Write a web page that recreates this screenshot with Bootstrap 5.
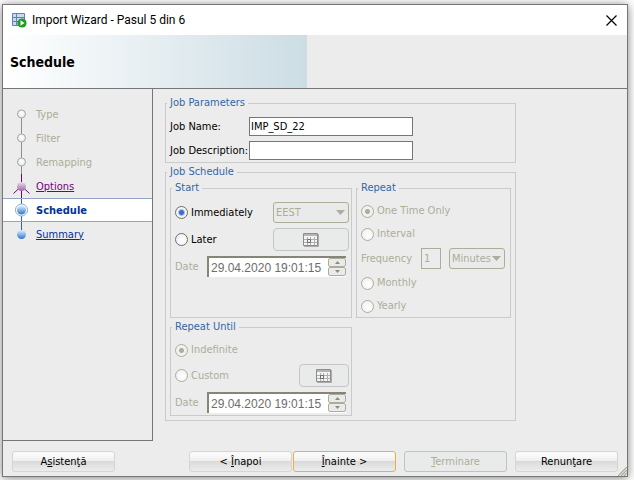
<!DOCTYPE html>
<html lang="ro">
<head>
<meta charset="utf-8">
<meta name="viewport" content="width=device-width, initial-scale=1">
<title>Import Wizard - Pasul 5 din 6</title>
<link href="https://cdn.jsdelivr.net/npm/bootstrap@5.3.0/dist/css/bootstrap.min.css" rel="stylesheet">
<style>
  :root { --face: #ececec; --frame: #767676; --group: #c8cacb; --off: #adad99; --title: #3467a5; }
  body { font-family: "DejaVu Sans Condensed", Tahoma, "Noto Sans", sans-serif; font-size: 11px; line-height: 14px; color: #000; background: #fff; padding: 4px 6px 3px 2px; }
  .wizard { background: var(--face); border: 1px solid var(--frame); box-shadow: 0 1px 9px rgba(0,0,0,.5); }
  .titlebar { height: 30px; padding: 0 8px 0 9px; font-family: Roboto, "Noto Sans", sans-serif; font-size: 12px; gap: 5px; }
  .close-btn { width: 16px; height: 16px; }
  .banner { height: 54px; border-bottom: 1px solid var(--frame); background: linear-gradient(90deg, #fff, #ccdde4) no-repeat 0 0 / 304px 100%; padding-left: 7px; }
  .banner h1 { font-size: 14px; line-height: 18px; }
  .steps { width: 150px; padding-top: 13px; border-right: 1px solid var(--frame); border-bottom: 1px solid var(--frame); }
  .step { height: 24px; padding-left: 6px; color: var(--off); }
  .step span, .step a { padding-top: 1px; }
  .step a { color: #003399; }
  .step a.visited { color: #730080; }
  .step.current { background: #fff; border: solid #94a3c6; border-width: 1px 0; font-weight: bold; color: #003399; }
  .step svg { margin-right: 3px; overflow: visible; }
  .panel { padding: 7px 12px 20px; }
  .panel form { max-width: 351px; gap: 2px; }
  fieldset { border: 1px solid var(--group); padding: 7px 2px 2px 4px; }
  legend { font-size: 11px; line-height: 14px; color: var(--title); padding: 0 3px; margin-left: -3px; }
  .outer { padding: 2px 4px 4px; }
  .start-area { grid-template-columns: 182fr 155fr; gap: 2px 4px; }
  .rows { gap: 5px; }
  .line { min-height: 18px; }
  .name-label { width: 79px; }
  .field { width: 164px; height: 19px; border: 1px solid var(--frame); padding: 0 1px; background: #fff; }
  input[type=radio] { appearance: none; width: 13px; height: 13px; margin: 0 3px 0 0; border: 1px solid #6f6f6f; border-radius: 50%; background: radial-gradient(circle at 60% 60%, #fff, #ececec); }
  input[type=radio]:checked { background: radial-gradient(circle, #3c6fc4 0 2px, #a9c3ea 3px, #f4f4f4 4px); }
  input[type=radio]:disabled { border-color: var(--off); }
  input[type=radio]:disabled:checked { background: radial-gradient(circle, var(--off) 0 2px, #f1f1f1 3px); }
  .off { color: var(--off); }
  .combo { appearance: none; height: 21px; border: 1px solid var(--off); border-radius: 3px; padding: 0 2px; color: var(--off); opacity: 1; background: #e9ebeb url("data:image/svg+xml,%3Csvg xmlns='http://www.w3.org/2000/svg' width='9' height='5'%3E%3Cpath d='M0 0h9L4.500 5z' fill='%23adad99'/%3E%3C/svg%3E") no-repeat right 3px center; }
  .zone { width: 76px; }
  .unit { width: 56px; }
  .freq { width: 20px; height: 21px; border: 1px solid var(--off); background: transparent; color: var(--off); padding: 0 2px; margin-right: 8px; }
  .freq-label { width: 60px; }
  .cal-btn { height: 23px; border: 1px solid #c3c6c6; border-radius: 4px; background: #e9ebeb; }
  .cal-wide { width: 76px; }
  .cal-narrow { width: 50px; }
  .date-label { width: 32px; flex: none; }
  .spin { height: 21px; min-width: 0; margin-right: 3px; background: #fff; border: solid #85857a; border-width: 2px 0 0 2px; }
  .spin input { width: 0; min-width: 0; border: 0; padding: 0 2px; background: transparent; color: #6d6d6d; font: 12px "Liberation Sans", Arial, sans-serif; }
  .spin button { width: 18px; height: 9px; border: 1px solid var(--off); border-radius: 2px; background: #e9ebeb; }
  .footer-bar { padding: 10px 9px 4px; }
  .push { width: 103px; height: 21px; border: 1px solid #d5d5d5; border-radius: 3px; background: linear-gradient(#f9f9f9 0 20%, #ededed 48%, #dadada 50%, #ececec); color: #000; }
  .push.next { border: 1px solid #efad3c; }
  .push:disabled { background: #e9ebeb; border-color: #bfc3c3; color: var(--off); }
  .back { margin-right: 1px; }
  .grip { right: 0; bottom: 0; }
</style>
</head>
<body>
<div class="wizard position-relative">
  <header class="titlebar bg-white d-flex align-items-center">
    <svg width="15" height="15" viewBox="0 0 15 15" aria-hidden="true"><path d="M.5.500h12v12H.500z" fill="#c8d9f2" stroke="#5b83bf"/><path d="M0 4.500h13M0 8.500h13M4.500 1v12" stroke="#5b83bf"/><circle cx="10" cy="10" r="4.600" fill="#1ca01c"/><path d="M8.500 7.200v5.600l4-2.800z" fill="#fff"/></svg>
    <span>Import Wizard - Pasul 5 din 6</span>
    <button type="button" class="close-btn ms-auto border-0 bg-transparent p-0 d-flex align-items-center justify-content-center" aria-label="Close"><svg width="11" height="11" viewBox="0 0 11 11"><path d="M.5.500l10 10M10.500.500l-10 10" stroke="#000" stroke-width="1.200"/></svg></button>
  </header>
  <div class="banner d-flex align-items-center"><h1 class="fw-bold m-0">Schedule</h1></div>
  <svg width="0" height="0" class="position-absolute" aria-hidden="true">
    <defs>
      <radialGradient id="pale" cy=".4"><stop offset="0" stop-color="#fff"/><stop offset="1" stop-color="#e7ebee"/></radialGradient>
      <linearGradient id="blue" x2="0" y2="1"><stop offset="0" stop-color="#e3effb"/><stop offset="1" stop-color="#2f74d0"/></linearGradient>
      <linearGradient id="plum" x2="0" y2="1"><stop offset="0" stop-color="#eadcec"/><stop offset="1" stop-color="#9a6aa2"/></linearGradient>
    </defs>
    <symbol id="calendar" viewBox="0 0 16 14"><path d="M1.500 1.500h14v12h-14z" fill="#bbb" stroke="#aaa"/><path d="M.5.500h14v12H.500z" fill="#f4f4f4" stroke="#8c8c8c"/><path d="M1 1h13v2H1z" fill="#b5b5b5"/><path d="M1 6.500h13M1 9.500h13M4.500 4v8M7.500 4v8M11.500 4v8" stroke="#b0b0b0"/><path d="M4.500 6.500h3v3h-3z" fill="none" stroke="#6f6f6f"/></symbol>
  </svg>
  <div class="d-flex">
    <nav class="steps flex-shrink-0" aria-label="Steps">
      <div class="step d-flex align-items-center"><svg width="24" height="24"><path d="M12.500 12v12" stroke="#8f8f8f"/><circle cx="12.500" cy="12" r="4" fill="url(#pale)" stroke="#a5a5a5"/></svg><span>Type</span></div>
      <div class="step d-flex align-items-center"><svg width="24" height="24"><path d="M12.500 0v24" stroke="#8f8f8f"/><circle cx="12.500" cy="12" r="4" fill="url(#pale)" stroke="#a5a5a5"/></svg><span>Filter</span></div>
      <div class="step d-flex align-items-center"><svg width="24" height="24"><path d="M12.500 0v24" stroke="#8f8f8f"/><circle cx="12.500" cy="12" r="4" fill="url(#pale)" stroke="#a5a5a5"/></svg><span>Remapping</span></div>
      <div class="step d-flex align-items-center"><svg width="24" height="24"><path d="M12.500 0v24M12.500 12l-8 7.500M12.500 12l8 7.500" stroke="#730080" fill="none"/><circle cx="12.500" cy="12.500" r="4.500" fill="url(#plum)"/></svg><a href="#" class="visited">Options</a></div>
      <div class="step current d-flex align-items-center" aria-current="step"><svg width="24" height="24"><path d="M12.500 1v22" stroke="#2c5fb8"/><circle cx="12.500" cy="12" r="6" fill="#fff" stroke="#7fb2cc"/><circle cx="12.500" cy="12" r="4.500" fill="url(#blue)"/></svg><span>Schedule</span></div>
      <div class="step d-flex align-items-center"><svg width="24" height="24"><path d="M12.500 0v10" stroke="#2c5fb8"/><circle cx="12.500" cy="12.500" r="4.500" fill="url(#blue)"/></svg><a href="#">Summary</a></div>
    </nav>
    <main class="panel flex-grow-1">
      <form class="d-flex flex-column">
        <fieldset>
          <legend class="float-none w-auto mb-0">Job Parameters</legend>
          <div class="rows d-flex flex-column">
            <div class="d-flex align-items-center"><label class="name-label text-nowrap" for="job">Job Name:</label><input class="field" id="job" type="text" value="IMP_SD_22"></div>
            <div class="d-flex align-items-center"><label class="name-label text-nowrap" for="desc">Job Description:</label><input class="field" id="desc" type="text"></div>
          </div>
        </fieldset>
        <fieldset class="outer">
          <legend class="float-none w-auto mb-0">Job Schedule</legend>
          <div class="start-area d-grid">
            <fieldset>
              <legend class="float-none w-auto mb-0">Start</legend>
              <div class="rows d-flex flex-column">
                <div class="line d-flex align-items-center justify-content-between">
                  <label class="d-flex align-items-center"><input type="radio" name="start" checked>Immediately</label>
                  <select class="combo zone" aria-label="Time zone" disabled><option>EEST</option></select>
                </div>
                <div class="line d-flex align-items-center justify-content-between">
                  <label class="d-flex align-items-center"><input type="radio" name="start">Later</label>
                  <button type="button" class="cal-btn cal-wide p-0 d-flex align-items-center justify-content-center" aria-label="Pick start date" disabled><svg width="16" height="14"><use href="#calendar"/></svg></button>
                </div>
                <div class="d-flex align-items-center">
                  <label class="date-label off" for="d1">Date</label>
                  <div class="spin d-flex flex-grow-1">
                    <input class="flex-grow-1" id="d1" type="text" value="29.04.2020 19:01:15" disabled>
                    <div class="d-flex flex-column"><button type="button" class="p-0 d-flex align-items-center justify-content-center" aria-label="Later" disabled><svg width="5" height="3"><path d="M0 3h5L2.500 0z" fill="#8a8a80"/></svg></button><button type="button" class="p-0 d-flex align-items-center justify-content-center" aria-label="Earlier" disabled><svg width="5" height="3"><path d="M0 0h5L2.500 3z" fill="#8a8a80"/></svg></button></div>
                  </div>
                </div>
              </div>
            </fieldset>
            <fieldset>
              <legend class="float-none w-auto mb-0">Repeat</legend>
              <div class="rows d-flex flex-column off">
                <label class="line d-flex align-items-center"><input type="radio" name="repeat" checked disabled>One Time Only</label>
                <label class="line d-flex align-items-center"><input type="radio" name="repeat" disabled>Interval</label>
                <div class="d-flex align-items-center"><label class="freq-label" for="freq">Frequency</label><input class="freq" id="freq" type="text" value="1" disabled><select class="combo unit" aria-label="Unit" disabled><option>Minutes</option></select></div>
                <label class="line d-flex align-items-center"><input type="radio" name="repeat" disabled>Monthly</label>
                <label class="line d-flex align-items-center"><input type="radio" name="repeat" disabled>Yearly</label>
              </div>
            </fieldset>
            <fieldset>
              <legend class="float-none w-auto mb-0">Repeat Until</legend>
              <div class="rows d-flex flex-column">
                <label class="line d-flex align-items-center off"><input type="radio" name="until" checked disabled>Indefinite</label>
                <div class="line d-flex align-items-center justify-content-between">
                  <label class="d-flex align-items-center off"><input type="radio" name="until" disabled>Custom</label>
                  <button type="button" class="cal-btn cal-narrow p-0 d-flex align-items-center justify-content-center" aria-label="Pick end date" disabled><svg width="16" height="14"><use href="#calendar"/></svg></button>
                </div>
                <div class="d-flex align-items-center">
                  <label class="date-label off" for="d2">Date</label>
                  <div class="spin d-flex flex-grow-1">
                    <input class="flex-grow-1" id="d2" type="text" value="29.04.2020 19:01:15" disabled>
                    <div class="d-flex flex-column"><button type="button" class="p-0 d-flex align-items-center justify-content-center" aria-label="Later" disabled><svg width="5" height="3"><path d="M0 3h5L2.500 0z" fill="#8a8a80"/></svg></button><button type="button" class="p-0 d-flex align-items-center justify-content-center" aria-label="Earlier" disabled><svg width="5" height="3"><path d="M0 0h5L2.500 3z" fill="#8a8a80"/></svg></button></div>
                  </div>
                </div>
              </div>
            </fieldset>
          </div>
        </fieldset>
      </form>
    </main>
  </div>
  <footer class="footer-bar d-flex">
    <button type="button" class="push p-0 me-auto">A<u>s</u>istenţă</button>
    <button type="button" class="push p-0 back">&lt; <u>Î</u>napoi</button>
    <button type="button" class="push next p-0 me-2"><u>Î</u>nainte &gt;</button>
    <button type="button" class="push p-0 me-2" disabled><u>T</u>erminare</button>
    <button type="button" class="push p-0">Renunţare</button>
  </footer>
  <svg class="grip position-absolute" width="9" height="9" aria-hidden="true"><path d="M0 9L9 0M3 9L9 3M6 9L9 6" stroke="#a5a592" stroke-width="1.200"/></svg>
</div>
<script src="https://cdn.jsdelivr.net/npm/bootstrap@5.3.0/dist/js/bootstrap.bundle.min.js"></script>
</body>
</html>
